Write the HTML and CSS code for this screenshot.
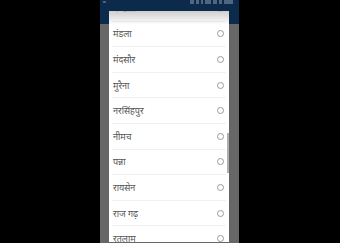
FILE: index.html
```html
<!DOCTYPE html>
<html lang="hi">
<head>
<meta charset="utf-8">
<link rel="stylesheet" href="styles.css">
</head>
<body>
<div class="phone">
  <div class="status">
    <span class="st-left"></span>
    <span class="st-icons">
      <span class="ic w3"></span><span class="ic w2"></span><span class="ic w1"></span><span class="ic w4"></span><span class="ic w3"></span><span class="ic w2"></span><span class="ic w5"></span>
    </span>
  </div>
  <div class="dialog">
    <div class="list">
      <div class="row first"><span class="label">मण्डला</span><span class="radio"></span></div>
      <div class="row"><span class="label">मंडला</span><span class="radio"></span></div>
      <div class="row"><span class="label">मंदसौर</span><span class="radio"></span></div>
      <div class="row"><span class="label">मुरैना</span><span class="radio"></span></div>
      <div class="row"><span class="label">नरसिंहपुर</span><span class="radio"></span></div>
      <div class="row"><span class="label">नीमच</span><span class="radio"></span></div>
      <div class="row"><span class="label">पन्ना</span><span class="radio"></span></div>
      <div class="row"><span class="label">रायसेन</span><span class="radio"></span></div>
      <div class="row"><span class="label">राज गढ़</span><span class="radio"></span></div>
      <div class="row"><span class="label">रतलाम</span><span class="radio"></span></div>
    </div>
    <div class="scrollbar"></div>
  </div>
</div>
</body>
</html>
```
FILE: styles.css
```css
html, body {
  margin: 0;
  padding: 0;
  background: #000;
  width: 340px;
  height: 243px;
  overflow: hidden;
}
.phone {
  width: 139px;
  height: 243px;
  margin-left: 100px;
  background: linear-gradient(#0c2a4c 0, #0c2a4c 24px, #676767 24px, #676767 100%);
  display: flex;
  flex-direction: column;
  overflow: hidden;
}
.status {
  height: 11px;
  display: flex;
  justify-content: space-between;
  align-items: flex-start;
  padding: 0 6px 0 3px;
  box-sizing: border-box;
}
.st-left {
  width: 3px;
  height: 2px;
  margin-top: 1px;
  background: #4c607a;
}
.st-icons {
  display: flex;
  gap: 2px;
}
.ic {
  height: 4px;
  background: #4f6580;
  filter: blur(0.5px);
}
.w1 { width: 2px; }
.w2 { width: 3px; }
.w3 { width: 4px; }
.w4 { width: 6px; }
.w5 { width: 9px; }
.dialog {
  position: relative;
  margin-left: 9px;
  width: 120px;
  flex: 1;
  background: #fff;
  overflow: hidden;
  margin-bottom: 1px;
}
.dialog::before {
  content: "";
  position: absolute;
  left: 0;
  right: 0;
  top: 0;
  height: 14px;
  background: linear-gradient(rgba(190,190,190,0.75), rgba(255,255,255,0));
  z-index: 2;
}
.list {
  display: flex;
  flex-direction: column;
  margin-top: -15px;
  padding: 0 3px;
}
.row {
  height: 25.6px;
  box-sizing: border-box;
  border-bottom: 1px solid #f0f0f0;
  display: flex;
  align-items: center;
  justify-content: space-between;
  padding: 0 2px 0 1px;
}
.label {
  font-family: "Noto Sans", "DejaVu Sans", sans-serif;
  font-size: 9px;
  color: #555;
}
.radio {
  width: 5px;
  height: 5px;
  border: 1.2px solid #9a9a9a;
  border-radius: 50%;
}
.scrollbar {
  position: absolute;
  right: 0;
  top: 122px;
  width: 2px;
  height: 40px;
  background: #b0b0b0;
}
```
